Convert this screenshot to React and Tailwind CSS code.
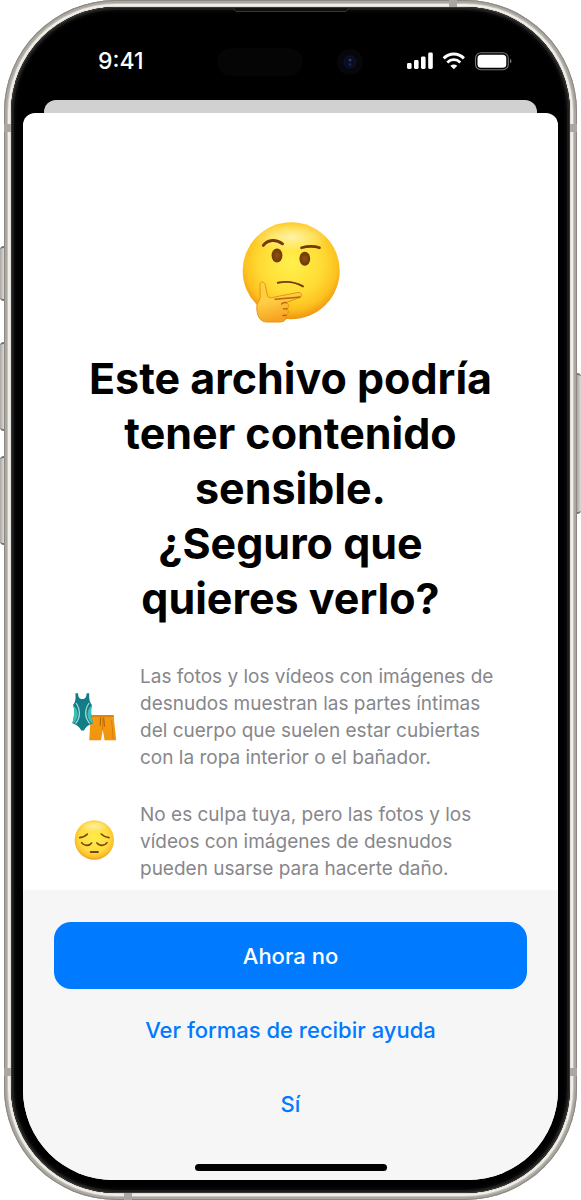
function ThinkingFace() {
  return (
    <svg viewBox="0 0 120 120" className="size-[120px]" role="img" aria-label="Cara pensativa">
      <defs>
        <radialGradient id="tf" cx="50%" cy="42%" r="58%">
          <stop offset="0" stopColor="#fff04c" />
          <stop offset="0.55" stopColor="#ffdc35" />
          <stop offset="0.82" stopColor="#fdc21f" />
          <stop offset="1" stopColor="#ef9410" />
        </radialGradient>
        <radialGradient id="tshine">
          <stop offset="0" stopColor="#fff" stopOpacity="0.6" />
          <stop offset="0.5" stopColor="#fffbd0" stopOpacity="0.35" />
          <stop offset="1" stopColor="#fff" stopOpacity="0" />
        </radialGradient>
        <linearGradient id="th" x1="0" y1="0" x2="0.3" y2="1">
          <stop offset="0" stopColor="#ffd23c" />
          <stop offset="0.5" stopColor="#ffce45" />
          <stop offset="1" stopColor="#f6a220" />
        </linearGradient>
        <radialGradient id="te">
          <stop offset="0" stopColor="#93520e" />
          <stop offset="1" stopColor="#6a3807" />
        </radialGradient>
      </defs>
      <circle cx="60.2" cy="60.7" r="48.5" fill="url(#tf)" />
      <ellipse cx="60.2" cy="27" rx="38" ry="14" fill="url(#tshine)" />
      <ellipse cx="46" cy="45.5" rx="5.4" ry="7" fill="url(#te)" />
      <ellipse cx="73.8" cy="48.7" rx="5.4" ry="7" fill="url(#te)" />
      <path d="M32.3 35.4C37 29.4 45 28.8 51.5 33.8" fill="none" stroke="#713a08" strokeWidth="2.9" strokeLinecap="round" />
      <path d="M70.5 37.8C77 36 83 35.9 88.5 37.8" fill="none" stroke="#713a08" strokeWidth="2.6" strokeLinecap="round" />
      <path d="M46.8 72.8C55 71 65 72.4 72 76.4" fill="none" stroke="#713a08" strokeWidth="1.9" strokeLinecap="round" />
      <path d="M29 74.5C29.2 71 33.2 71 34.4 75L36.5 86C38 88.5 41 87.8 43.7 87L67 82.5C71 82 71.8 86.2 68.5 87.7L55.5 92.5C58.3 94 58.2 97 56.3 98.5C58 101 57.5 104 55 105.4C56.5 109 53.5 111.8 49 112H36C29.5 112 26 106.5 25.8 98C25.7 93 28 91 29.2 88Z" fill="url(#th)" stroke="#e89316" strokeWidth="1" />
      <path d="M44 89.2C51 88.7 62 87.9 69 87M55.5 92.7C53 92.2 51.5 93 50.5 94M56 98.7L52.5 98.9M55 105.2L52 105.5" fill="none" stroke="#b9650a" strokeWidth="1.4" strokeLinecap="round" />
    </svg>
  );
}

function Swimwear() {
  return (
    <svg viewBox="0 0 70 70" className="size-[70px]" role="img" aria-label="Bañador">
      <defs>
        <linearGradient id="sh" x1="0" y1="0" x2="0" y2="1">
          <stop offset="0" stopColor="#f59b13" />
          <stop offset="1" stopColor="#f0940f" />
        </linearGradient>
      </defs>
      <path d="M30.8 33H53.5L56.2 58.2H44.6L42.8 48L41 58.2H29.2Z" fill="url(#sh)" />
      <path d="M31 33H53.6L53.9 35.3H30.8Z" fill="#de8609" />
      <path d="M42.6 36V48M51.6 38L53.3 57" fill="none" stroke="#d27c08" strokeWidth="0.9" />
      <path d="M40.6 35.5L40.1 43.7M43.7 35.5L44.4 44.7" fill="none" stroke="#a95d06" strokeWidth="1" />
      <path d="M15.4 11.2H18C18.3 15 19.2 17.1 22.3 17.1S26.3 15 26.7 11.2H29.2C29 17 29.6 20 32 23C30.4 28 31 34 33 41.2C29 42.5 25.6 45 24 48.5H21.3C19.5 45 16.4 42.5 12.4 41.2C14.4 34 15 28 13 23C15.4 20 15.8 17 15.4 11.2Z" fill="#117d87" />
      <path d="M13.4 23.5C19 28 19.2 36 13.6 41.2L12.4 41.2C14.4 34 15 28 13 23ZM31.6 23.5C26.2 28 26 36 31.8 41.2L33 41.2C31 34 30.4 28 32 23Z" fill="#3ac2b4" />
      <path d="M16 21C20.8 28 20.4 36 15.5 41.6M29.1 21C24.2 28 24.6 36 29.9 41.6" fill="none" stroke="#a9d8da" strokeWidth="1.3" />
    </svg>
  );
}

function PensiveFace() {
  return (
    <svg viewBox="0 0 70 70" className="size-[70px]" role="img" aria-label="Cara triste">
      <defs>
        <radialGradient id="pf" cx="50%" cy="44%" r="56%">
          <stop offset="0" stopColor="#ffec4b" />
          <stop offset="0.65" stopColor="#ffdc42" />
          <stop offset="0.88" stopColor="#fcc12a" />
          <stop offset="1" stopColor="#ec9c1c" />
        </radialGradient>
        <radialGradient id="pshine">
          <stop offset="0" stopColor="#fff" stopOpacity="0.5" />
          <stop offset="1" stopColor="#fff" stopOpacity="0" />
        </radialGradient>
      </defs>
      <circle cx="34.3" cy="33" r="19.7" fill="url(#pf)" />
      <ellipse cx="34.3" cy="19" rx="15" ry="6" fill="url(#pshine)" />
      <path d="M19.7 30.6C23 30.2 25.8 28.9 27.4 27M41.2 27C43 28.9 45.7 30.2 49 30.6M21.6 35.6C23.8 39.1 29.2 39.3 31.6 36M36.9 36C39.5 39.3 44.7 39.1 47 35.6" fill="none" stroke="#75450f" strokeWidth="1.6" strokeLinecap="round" />
      <path d="M30.8 45H37.8" stroke="#75450f" strokeWidth="2.2" strokeLinecap="round" />
    </svg>
  );
}

function StatusIcons() {
  return (
    <svg viewBox="0 0 106 20" className="h-5 w-[106px]" aria-hidden="true">
      <g fill="#fff">
        <rect x="1" y="12" width="4.6" height="6" rx="1.4" />
        <rect x="8" y="9" width="4.6" height="9" rx="1.4" />
        <rect x="15" y="5.5" width="4.6" height="12.5" rx="1.4" />
        <rect x="22.2" y="1.5" width="4.6" height="16.5" rx="1.4" />
        <path d="M47.8 18.2L44.3 14.7Q47.8 12.2 51.3 14.7Z" />
        <rect x="71.5" y="3.8" width="28.8" height="13" rx="3.6" />
        <path d="M104 7.7V12.3C106 11.4 106 8.6 104 7.7Z" fill="#777" />
      </g>
      <path d="M37.7 7.3C43.5 1.7 52.1 1.7 57.9 7.3" fill="none" stroke="#fff" strokeWidth="3" />
      <path d="M41.3 11.4C45 7.8 50.6 7.8 54.3 11.4" fill="none" stroke="#fff" strokeWidth="2.8" />
      <rect x="69.5" y="1.8" width="32.8" height="17" rx="5.4" fill="none" stroke="#777" strokeWidth="1.1" />
    </svg>
  );
}

const Lines = ({ lines }) =>
  lines.map((line) => (
    <span key={line} className="block whitespace-nowrap">
      {line}{" "}
    </span>
  ));

const sideKey = "absolute w-1 border-y-2 border-[#77736e] bg-linear-to-r from-[#aaa6a1] to-[#dedad5]";
const band = "absolute bg-[#aaa7a2]";

export default function App() {
  return (
    <main className="relative bg-white px-1 font-['Inter','Liberation_Sans',sans-serif]">
      <i className={`${sideKey} left-0 top-[246px] h-[55px] rounded-l-sm`} />
      <i className={`${sideKey} left-0 top-[342px] h-[89px] rounded-l-sm`} />
      <i className={`${sideKey} left-0 top-[456px] h-[89px] rounded-l-sm`} />
      <i className={`${sideKey} right-0 top-[373px] h-[141px] rounded-r-sm`} />

      <div className="relative rounded-[112px] bg-[#dfdcd5] p-[7px] shadow-[inset_0_0_0_1px_#8b8782,inset_0_0_0_3px_#aaa7a2,inset_0_0_0_4px_#c5c2bc,inset_0_0_0_6px_#f0eee6]">
        <i className={`${band} left-0 top-[124px] h-2 w-[7px]`} />
        <i className={`${band} right-0 top-[124px] h-2 w-[7px]`} />
        <i className={`${band} bottom-[124px] left-0 h-2 w-[7px]`} />
        <i className={`${band} bottom-[124px] right-0 h-2 w-[7px]`} />
        <i className={`${band} right-[120px] top-0 h-[7px] w-2`} />
        <i className={`${band} bottom-0 left-[120px] h-[7px] w-2`} />

        <div className="relative rounded-[105px] bg-black px-3 pb-[13px] shadow-[inset_0_0_0_1px_#373837,inset_0_0_0_3px_#1b1c1b,inset_0_0_4px_3px_#151515]">
          <svg viewBox="0 0 116 5" className="absolute left-1/2 top-0 h-[5px] w-[116px] -translate-x-1/2" aria-hidden="true">
            <path d="M0 1L3 4.5H113L116 1" fill="#111" stroke="#343434" />
          </svg>
          <header className="relative flex h-[93px] items-center justify-between pl-[75px] pr-[46px] pt-[14px]">
            <time className="text-[23px] font-medium leading-7 text-white">9:41</time>
            <span className="absolute left-[194px] top-[41px] h-7 w-[86px] rounded-full bg-[#050505]" />
            <span className="absolute left-[314px] top-[42px] flex size-[26px] items-center justify-center rounded-full bg-[#07060a]">
              <svg viewBox="0 0 14 14" className="size-[14px]" aria-hidden="true">
                <circle cx="7" cy="7" r="6" fill="#090c25" stroke="#101334" />
                <circle cx="7" cy="5" r="1.6" fill="#29376b" />
                <circle cx="7" cy="9.5" r="1.5" fill="#18225b" />
              </svg>
            </span>
            <StatusIcons />
          </header>
          <div className="mx-[21px] h-[13px] rounded-t-[12px] bg-[#d1d1d1]" />

          <section className="overflow-hidden rounded-b-[90px] rounded-t-[12px] bg-white">
            <div className="flex flex-col items-center pt-[97px]">
              <ThinkingFace />
              <h1 className="mt-[21px] text-center text-[43px] font-bold leading-[55px] text-black">
                <Lines lines={["Este archivo podría", "tener contenido", "sensible.", "¿Seguro que", "quieres verlo?"]} />
              </h1>
            </div>
            <div className="flex flex-col gap-[30px] pb-2 pl-[37px] pt-[37px] text-[19px] leading-[27px] text-[#87878b]">
              <div className="flex items-center gap-[10px]">
                <Swimwear />
                <p><Lines lines={["Las fotos y los vídeos con imágenes de", "desnudos muestran las partes íntimas", "del cuerpo que suelen estar cubiertas", "con la ropa interior o el bañador."]} /></p>
              </div>
              <div className="flex items-center gap-[10px]">
                <PensiveFace />
                <p><Lines lines={["No es culpa tuya, pero las fotos y los", "vídeos con imágenes de desnudos", "pueden usarse para hacerte daño."]} /></p>
              </div>
            </div>
            <footer className="flex flex-col items-center bg-[#f6f6f6] px-[31px] pb-[9px] pt-8 text-[22px] font-medium leading-7 text-[#007aff]">
              <button type="button" className="h-[67px] w-full rounded-[17px] bg-[#007aff] text-white">Ahora no</button>
              <button type="button" className="mt-[14px] h-[54px] whitespace-nowrap px-4">Ver formas de recibir ayuda</button>
              <button type="button" className="mt-5 h-[54px] px-8">Sí</button>
              <span className="mt-[33px] h-[7px] w-48 rounded-full bg-black" />
            </footer>
          </section>
        </div>
      </div>
    </main>
  );
}
